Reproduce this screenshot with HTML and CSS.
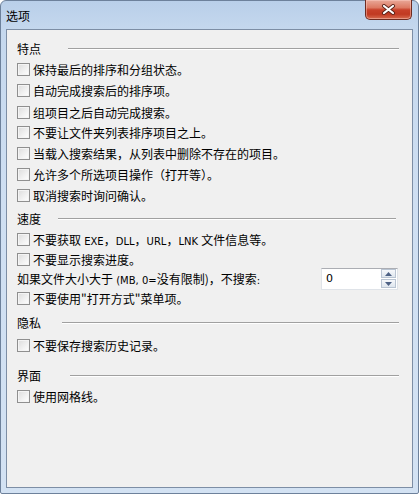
FILE: index.html
```html
<!DOCTYPE html>
<html lang="zh-CN">
<head>
<meta charset="utf-8">
<title>选项</title>
<link rel="stylesheet" href="styles.css">
</head>
<body>
<div class="window">
  <div class="titlebar">
    <span class="title">选项</span>
    <button class="close" aria-label="关闭">
      <svg width="15" height="11" viewBox="0 0 15 11">
        <path d="M3 2 L12 9 M12 2 L3 9" stroke="#5a2218" stroke-width="4" stroke-linecap="round"/>
        <path d="M3 2 L12 9 M12 2 L3 9" stroke="#ffffff" stroke-width="2.2" stroke-linecap="round"/>
      </svg>
    </button>
  </div>
  <div class="client">
    <div class="head head-a"><span>特点</span><i class="rule"></i></div>
    <label class="row"><span class="cb"></span><span>保持最后的排序和分组状态。</span></label>
    <label class="row"><span class="cb"></span><span>自动完成搜索后的排序项。</span></label>
    <label class="row row-t"><span class="cb"></span><span>组项目之后自动完成搜索。</span></label>
    <label class="row row-s"><span class="cb"></span><span>不要让文件夹列表排序项目之上。</span></label>
    <label class="row row-t"><span class="cb"></span><span>当载入搜索结果，从列表中删除不存在的项目。</span></label>
    <label class="row"><span class="cb"></span><span>允许多个所选项目操作（打开等）。</span></label>
    <label class="row"><span class="cb"></span><span>取消搜索时询问确认。</span></label>

    <div class="head head-b gap-b"><span>速度</span><i class="rule"></i></div>
    <label class="row"><span class="cb"></span><span>不要获取<span class="lat"> EXE</span>，<span class="lat">DLL</span>，<span class="lat">URL</span>，<span class="lat">LNK </span>文件信息等。</span></label>
    <label class="row row-s"><span class="cb"></span><span>不要显示搜索进度。</span></label>
    <div class="row spin-row">
      <span class="plain">如果文件大小大于<span class="lat"> (MB, 0=</span>没有限制)，不搜索<span class="lat">:</span></span>
      <div class="spin">
        <span class="spin-val">0</span>
        <span class="spin-btns">
          <span class="sb"><svg width="7" height="4" viewBox="0 0 7 4"><path d="M0 4 L3.5 0 L7 4 Z" fill="#4d6185"/></svg></span>
          <span class="sb"><svg width="7" height="4" viewBox="0 0 7 4"><path d="M0 0 L3.5 4 L7 0 Z" fill="#4d6185"/></svg></span>
        </span>
      </div>
    </div>
    <label class="row"><span class="cb"></span><span>不要使用"打开方式"菜单项。</span></label>

    <div class="head head-c gap-c"><span>隐私</span><i class="rule"></i></div>
    <label class="row row-l"><span class="cb"></span><span>不要保存搜索历史记录。</span></label>

    <div class="head head-d gap-d"><span>界面</span><i class="rule"></i></div>
    <label class="row"><span class="cb"></span><span>使用网格线。</span></label>
  </div>
</div>
</body>
</html>
```

FILE: styles.css
```css
* { box-sizing: border-box; }
html, body {
  margin: 0;
  padding: 0;
  width: 419px;
  height: 494px;
  overflow: hidden;
  background: #ffffff;
}
body {
  font-family: "Noto Sans CJK SC", "Noto Sans", sans-serif;
  font-size: 12px;
  color: #000;
}
.window {
  width: 419px;
  height: 494px;
  border: 1px solid #6d819b;
  border-radius: 6px 6px 2px 2px;
  background: linear-gradient(180deg, #b9cfe9 0px, #c5d8ee 30px, #cfdff2 200px, #d3e2f3 100%);
  padding: 0 5px 5px 5px;
  display: flex;
  flex-direction: column;
}
.titlebar {
  height: 28px;
  display: flex;
  justify-content: space-between;
  align-items: flex-start;
  flex: none;
}
.title {
  padding-top: 5px;
  font-size: 12px;
  line-height: 20px;
  color: #000;
}
.close {
  width: 47px;
  height: 20px;
  margin: -1px 1px 0 0;
  padding: 0;
  border: 1px solid #6e2b20;
  border-top: none;
  border-radius: 0 0 5px 5px;
  background: linear-gradient(180deg, #e9a898 0%, #dd7a63 40%, #c8412a 52%, #c13a22 75%, #d76c50 100%);
  box-shadow: inset 0 0 0 1px rgba(255,210,200,0.45);
  display: flex;
  align-items: center;
  justify-content: center;
}
.client {
  flex: 1;
  background: #f0f0f0;
  border: 1px solid #7d8ea5;
  padding: 8px 0 0 10px;
  display: flex;
  flex-direction: column;
}
.head {
  height: 21px;
  display: flex;
  align-items: center;
  font-size: 12px;
}
.rule {
  display: block;
  height: 2px;
  border-top: 1px solid #a0a0a0;
  border-bottom: 1px solid #ffffff;
  margin-right: 13px;
  flex: 1;
}
.head-a .rule { margin-left: 27px; }
.head-b .rule { margin-left: 17px; margin-right: 16px; }
.head-c .rule { margin-left: 21px; }
.head-d .rule { margin-left: 29px; }
.gap-b { margin-top: 2px; }
.gap-c { margin-top: 3px; }
.gap-d { margin-top: 8px; }
.row {
  height: 21px;
  display: flex;
  align-items: center;
  white-space: pre;
  font-size: 12px;
}
.row-t { height: 22px; }
.row-s { height: 19px; }
.row-l { height: 24px; }
.cb {
  width: 13px;
  height: 13px;
  border: 1px solid #8f8f8f;
  background: linear-gradient(135deg, #dcdcdc 0%, #f2f2f2 60%, #ffffff 100%);
  box-shadow: inset 0 0 0 1px #f4f4f4;
  margin-right: 3px;
  flex: none;
}
.lat {
  font-family: "DejaVu Sans", "Liberation Sans", sans-serif;
  font-size: 10px;
}
.spin-row {
  height: 19px;
  justify-content: space-between;
  padding-right: 14px;
}
.spin {
  width: 77px;
  height: 22px;
  margin: -2px 0;
  background: #ffffff;
  border: 1px solid #dfe3e8;
  border-top-color: #abadb3;
  display: flex;
  align-items: center;
  justify-content: space-between;
  padding: 0 1px 0 4px;
}
.spin-val {
  font-family: "DejaVu Sans", "Liberation Sans", sans-serif;
  font-size: 11px;
}
.spin-btns {
  display: flex;
  flex-direction: column;
  gap: 1px;
}
.sb {
  width: 15px;
  height: 9px;
  border: 1px solid #b9c4d2;
  background: linear-gradient(180deg, #f6f8fb, #dfe6ee);
  display: flex;
  align-items: center;
  justify-content: center;
}
```
